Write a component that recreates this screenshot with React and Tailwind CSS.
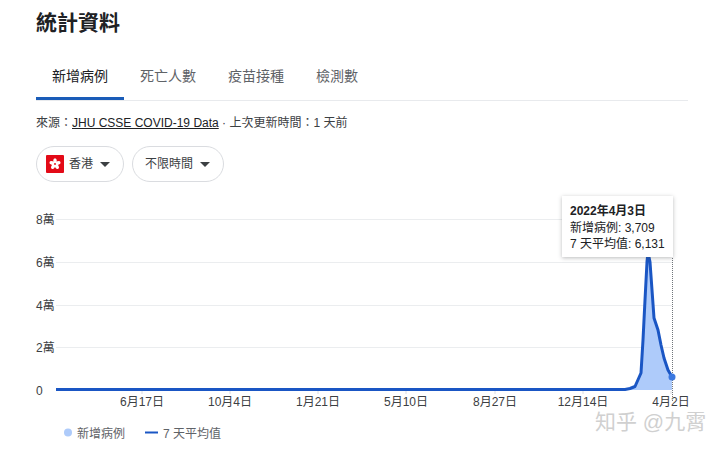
const tabs = ['新增病例', '死亡人數', '疫苗接種', '檢測數'];
const yLabels = [['8萬', 219], ['6萬', 262], ['4萬', 305], ['2萬', 347], ['0', 390]];
const xLabels = [['6月17日', 142], ['10月4日', 230], ['1月21日', 318], ['5月10日', 406], ['8月27日', 495], ['12月14日', 583], ['4月2日', 671]];

const curve = 'M56 389.5 L625 389.5 L630 388.5 L635 386.5 L641 373 L643 340 L645 300 L647 262 L648 252 L650 262 L652 290 L654 318 L658 330 L661 345 L664 358 L668 370 L672 377';

const Flag = () => (
    <svg width="18" height="18" viewBox="0 0 18 18">
        <rect width="18" height="18" rx="1" fill="#e30a17" />
        {[0, 72, 144, 216, 288].map((r) => (
            <ellipse key={r} cx="9" cy="6" rx="1.8" ry="2.8" fill="#fff" transform={`rotate(${r} 9 9)`} />
        ))}
        <circle cx="9" cy="9" r="0.9" fill="#e30a17" />
    </svg>
);

const Caret = () => <span className="w-0 h-0 border-x-[5px] border-x-transparent border-t-[5px] border-t-[#3c4043]"></span>;

export default function App() {
    return (
        <div className="relative w-[728px] h-[451px] overflow-hidden bg-white font-['Liberation_Sans','Noto_Sans_CJK_TC',sans-serif]">
            <div className="pl-9 pr-10">
                <h1 className="pt-2 h-[52px] text-[21px] leading-[30px] font-bold text-[#202124]">統計資料</h1>

                {/* Tabs */}
                <div className="flex h-[49px] border-b border-[#e8eaed]">
                    {tabs.map((tab, i) => (
                        <div
                            key={tab}
                            className={`px-4 h-[48px] flex items-center text-sm ${i === 0 ? 'text-[#202124] border-b-[3px] border-[#1a5cb8] pt-[3px]' : 'text-[#5f6368]'}`}
                        >
                            {tab}
                        </div>
                    ))}
                </div>

                <p className="mt-[14px] text-xs leading-4 text-[#3c4043]">
                    來源：<span className="underline text-[#202124]">JHU CSSE COVID-19 Data</span> · 上次更新時間：1 天前
                </p>

                {/* Filters */}
                <div className="flex gap-2 mt-[15px]">
                    <div className="w-[88px] h-9 pl-[9px] flex items-center gap-[5px] border border-[#dadce0] rounded-full text-xs text-[#3c4043]">
                        <Flag />
                        <span>香港</span>
                        <span className="ml-[2px] flex"><Caret /></span>
                    </div>
                    <div className="w-[92px] h-9 pl-3 flex items-center border border-[#dadce0] rounded-full text-xs text-[#3c4043]">
                        <span>不限時間</span>
                        <span className="ml-[7px] flex"><Caret /></span>
                    </div>
                </div>
            </div>

            {/* Chart */}
            <svg className="block" width="728" height="269" viewBox="0 182 728 269">
                {yLabels.slice(0, 4).map(([label, y]) => (
                    <line key={label} x1="56" x2="672" y1={y + 0.5} y2={y + 0.5} stroke="#ebedef" />
                ))}
                {yLabels.map(([label, y]) => (
                    <text key={label} x="36" y={y + 5} fontSize="12" fill="#3c4043">{label}</text>
                ))}
                {xLabels.map(([label, x]) => (
                    <g key={label}>
                        <line x1={x} x2={x} y1="391" y2="394" stroke="#dadce0" />
                        <text x={x} y="406" fontSize="12" textAnchor="middle" fill="#3c4043">{label}</text>
                    </g>
                ))}
                <path d={`${curve} L672 390 L628 390 Z`} fill="#aecbfa" />
                <line x1="672.5" x2="672.5" y1="250" y2="402" stroke="#70757a" strokeDasharray="1 1" />
                <path d={curve} fill="none" stroke="#1a56c4" strokeWidth="3" strokeLinejoin="round" />
                <circle cx="672" cy="377" r="3.5" fill="#3b78e0" />
                <circle cx="68" cy="432.5" r="4" fill="#aecbfa" />
                <text x="77" y="437.5" fontSize="12" fill="#5f6368">新增病例</text>
                <line x1="145" x2="158" y1="432.5" y2="432.5" stroke="#1a56c4" strokeWidth="2" />
                <text x="163" y="437.5" fontSize="12" fill="#5f6368">7 天平均值</text>
            </svg>

            {/* Tooltip */}
            <div className="absolute left-[562px] top-[196px] w-[111px] h-[61px] pl-2 pt-[7px] bg-white shadow-[0_1px_4px_rgba(60,64,67,0.35)] text-xs leading-4 text-[#202124]">
                <div className="font-bold">2022年4月3日</div>
                <div className="mt-[1px]">新增病例: 3,709</div>
                <div>7 天平均值: 6,131</div>
            </div>

            {/* Watermark */}
            <div className="absolute left-[595px] top-[410px] text-[21px] leading-6 text-[#d0d0d0] whitespace-nowrap [text-shadow:0_0_2px_#fff]">知乎 @九霄</div>
        </div>
    );
}
